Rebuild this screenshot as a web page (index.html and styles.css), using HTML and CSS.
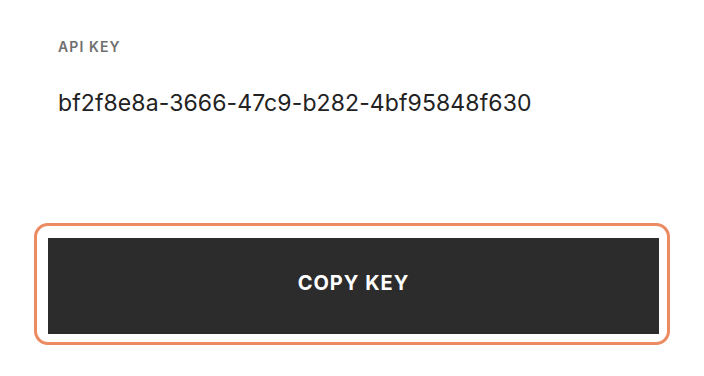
FILE: index.html
```html
<!DOCTYPE html>
<html>
<head>
<meta charset="utf-8">
<link rel="stylesheet" href="styles.css">
</head>
<body>
<div class="panel">
  <div class="label">API KEY</div>
  <div class="key">bf2f8e8a-3666-47c9-b282-4bf95848f630</div>
  <div class="focus-ring">
    <button class="copy-btn">COPY KEY</button>
  </div>
</div>
</body>
</html>
```
FILE: styles.css
```css
html, body {
  margin: 0;
  padding: 0;
  background: #ffffff;
}
.panel {
  width: 704px;
  height: 376px;
  box-sizing: border-box;
  padding: 38px 0 0 34px;
  font-family: Inter, "Noto Sans", sans-serif;
}
.label {
  margin-left: 24px;
  font-size: 14px;
  line-height: 17px;
  font-weight: 600;
  letter-spacing: 1.1px;
  color: #6f6f6f;
}
.key {
  margin-left: 24px;
  margin-top: 35px;
  font-size: 23px;
  line-height: 26px;
  letter-spacing: 0.1px;
  color: #222222;
}
.focus-ring {
  margin-top: 107px;
  width: 636px;
  height: 122px;
  box-sizing: border-box;
  border: 3px solid #ec8a61;
  border-radius: 14px;
  padding: 12px 8px 8px 11px;
}
.copy-btn {
  display: flex;
  align-items: center;
  justify-content: center;
  width: 100%;
  height: 100%;
  border: none;
  background: #2c2c2c;
  color: #ffffff;
  font-family: Inter, "Noto Sans", sans-serif;
  font-size: 20px;
  font-weight: 700;
  letter-spacing: 1px;
  padding: 0 0 6px 0;
  margin: 0;
  cursor: pointer;
}
```
